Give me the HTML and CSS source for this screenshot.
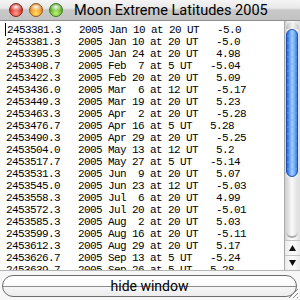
FILE: index.html
```html
<!DOCTYPE html>
<html lang="en">
<head>
    <meta charset="UTF-8">
    <title>Moon Extreme Latitudes 2005</title>
    <link rel="stylesheet" href="styles.css">
</head>
<body>
    <div class="window">
        <div class="titlebar">
            <span class="light red"></span>
            <span class="light orange"></span>
            <span class="light green"></span>
            <span class="title">Moon Extreme Latitudes 2005</span>
        </div>

        <div class="content">
            <pre class="output"><span class="caret"></span>2453381.3   2005 Jan 10 at 20 UT   -5.0
2453381.3   2005 Jan 10 at 20 UT   -5.0
2453395.3   2005 Jan 24 at 20 UT   4.98
2453408.7   2005 Feb  7 at 5 UT   -5.04
2453422.3   2005 Feb 20 at 20 UT   5.09
2453436.0   2005 Mar  6 at 12 UT   -5.17
2453449.3   2005 Mar 19 at 20 UT   5.23
2453463.3   2005 Apr  2 at 20 UT   -5.28
2453476.7   2005 Apr 16 at 5 UT   5.28
2453490.3   2005 Apr 29 at 20 UT   -5.25
2453504.0   2005 May 13 at 12 UT   5.2
2453517.7   2005 May 27 at 5 UT   -5.14
2453531.3   2005 Jun  9 at 20 UT   5.07
2453545.0   2005 Jun 23 at 12 UT   -5.03
2453558.3   2005 Jul  6 at 20 UT   4.99
2453572.3   2005 Jul 20 at 20 UT   -5.01
2453585.3   2005 Aug  2 at 20 UT   5.03
2453599.3   2005 Aug 16 at 20 UT   -5.11
2453612.3   2005 Aug 29 at 20 UT   5.17
2453626.7   2005 Sep 13 at 5 UT   -5.24
2453639.7   2005 Sep 26 at 5 UT   5.28</pre>

            <div class="scrollbar">
                <div class="sb-cap"></div>
                <div class="sb-thumb"></div>
                <div class="sb-rest"></div>
                <div class="sb-arrow sb-up">
                    <svg width="7" height="6" viewBox="0 0 7 6"><path d="M3.5 0 L7 6 L0 6 Z" fill="#111"/></svg>
                </div>
                <div class="sb-arrow sb-down">
                    <svg width="7" height="6" viewBox="0 0 7 6"><path d="M0 0 L7 0 L3.5 6 Z" fill="#111"/></svg>
                </div>
            </div>
        </div>

        <div class="footer">
            <button class="btn" type="button">hide window</button>
            <svg class="grip" width="12" height="12" viewBox="0 0 12 12">
                <path d="M11 2 L2 11 M11 6 L6 11 M11 10 L10 11" stroke="#888" stroke-width="1"/>
                <path d="M12 3 L3 12 M12 7 L7 12" stroke="#fff" stroke-width="1"/>
            </svg>
        </div>
    </div>
</body>
</html>
```

FILE: styles.css
```css
* {
    margin: 0;
    padding: 0;
    box-sizing: border-box;
}

body {
    width: 300px;
    height: 300px;
    overflow: hidden;
    background: #fff;
}

.window {
    display: flex;
    flex-direction: column;
    width: 300px;
    height: 300px;
    background: #f7f7f7;
}

.titlebar {
    display: flex;
    align-items: center;
    height: 21px;
    padding-left: 9px;
    gap: 6px;
    background: linear-gradient(#f4f4f4 0, #e8e8e8 8px, #c9c9c9 10px, #c2c2c2 20px);
    border-bottom: 1px solid #8e8e8e;
}

.light {
    width: 14px;
    height: 14px;
    border-radius: 50%;
    flex: none;
}

.red {
    border: 1px solid #8a1f18;
    background:
        radial-gradient(ellipse 55% 35% at 50% 24%, rgba(255,255,255,0.95), rgba(255,255,255,0) 100%),
        radial-gradient(circle at 50% 78%, #ffa090 0, #e2463a 45%, #a3160e 100%);
}

.orange {
    border: 1px solid #94561a;
    background:
        radial-gradient(ellipse 55% 35% at 50% 24%, rgba(255,255,255,0.95), rgba(255,255,255,0) 100%),
        radial-gradient(circle at 50% 78%, #ffe070 0, #f2a02c 45%, #b3600c 100%);
}

.green {
    border: 1px solid #3f7a1c;
    background:
        radial-gradient(ellipse 55% 35% at 50% 24%, rgba(255,255,255,0.95), rgba(255,255,255,0) 100%),
        radial-gradient(circle at 50% 78%, #c8f080 0, #6cbf34 45%, #2f7a10 100%);
}

.title {
    margin-left: 5px;
    font-family: Roboto, "DejaVu Sans", sans-serif;
    font-size: 14.5px;
    color: #000;
    white-space: nowrap;
}

.content {
    display: flex;
    height: 250px;
    background: #fff;
    border-bottom: 1px solid #b5b5b5;
}

.output {
    flex: 1;
    overflow: hidden;
    padding: 2px 0 0 6px;
    font-family: "Liberation Mono", "DejaVu Sans Mono", monospace;
    font-size: 11px;
    letter-spacing: -0.6px;
    line-height: 12px;
    color: #000;
}

.caret {
    display: inline-block;
    width: 0;
    height: 13px;
    margin-left: -1px;
    margin-right: 1px;
    border-left: 1px solid #000;
    vertical-align: -3px;
}

.scrollbar {
    display: flex;
    flex-direction: column;
    width: 16px;
    border-left: 1px solid #a8a8a8;
    background: linear-gradient(90deg, #cfcfcf 0, #ececec 3px, #fdfdfd 7px, #f0f0f0 11px, #dcdcdc 15px);
}

.sb-cap {
    height: 7px;
    margin: 1px 1px 0;
    border-radius: 6px 6px 0 0;
    background: linear-gradient(90deg, #bdbdbd, #f4f4f4 50%, #c8c8c8);
}

.sb-thumb {
    height: 148px;
    margin: 0 2px 0 1px;
    border-radius: 6px;
    border: 1px solid #1d4fb8;
    background:
        repeating-linear-gradient(180deg, rgba(255,255,255,0) 0, rgba(255,255,255,0) 5px, rgba(120,170,240,0.35) 5px, rgba(120,170,240,0.35) 7px),
        linear-gradient(90deg, #2a63d8 0, #5d9cf2 25%, #a6d2ff 50%, #6fb0f8 75%, #3a78e0 100%);
}

.sb-rest {
    flex: 1;
    margin: 0 2px 2px 1px;
    border-radius: 0 0 6px 6px;
    border-bottom: 2px solid #a9a9a9;
    background: linear-gradient(90deg, #d2d2d2, #fafafa 50%, #dedede);
}

.sb-arrow {
    display: flex;
    align-items: center;
    justify-content: center;
    height: 15px;
    border-top: 1px solid #c4c4c4;
    background: linear-gradient(90deg, #eaeaea, #fdfdfd 50%, #ececec);
}

.footer {
    position: relative;
    flex: 1;
    padding: 4px 3px 0 2px;
}

.btn {
    display: block;
    width: 100%;
    height: 22px;
    border: 1px solid #6d6d6d;
    border-radius: 11px;
    font-family: Roboto, "DejaVu Sans", sans-serif;
    font-size: 14px;
    color: #000;
    background: linear-gradient(#ffffff 0, #fbfbfb 49%, #8c8c8c 49%, #8c8c8c calc(49% + 1px), #f6f6f6 calc(49% + 1px), #ececec 100%);
}

.grip {
    position: absolute;
    right: 1px;
    bottom: 1px;
}
```
